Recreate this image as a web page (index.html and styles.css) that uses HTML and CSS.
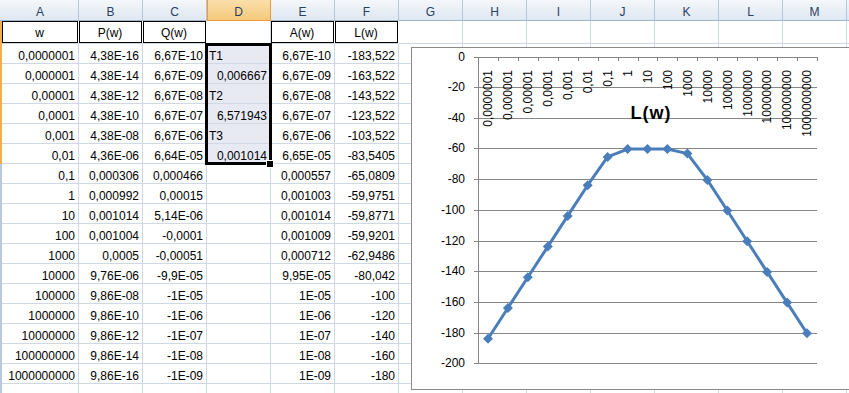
FILE: index.html
```html
<!DOCTYPE html>
<html lang="en">
<head>
    <meta charset="UTF-8">
    <meta name="viewport" content="width=device-width, initial-scale=1.0">
    <title>L(w) - Sheet1</title>
    <link rel="stylesheet" href="styles.css">
</head>
<body>
    <div class="sheet">
        <div class="row head">
            <div class="rh"></div><div>A</div><div>B</div><div>C</div><div class="cur">D</div><div>E</div><div>F</div><div>G</div><div>H</div><div>I</div><div>J</div><div>K</div><div>L</div><div>M</div><div></div>
        </div>

        <div class="row top">
            <div class="rh sel"></div><div class="box">w</div><div class="box">P(w)</div><div class="box">Q(w)</div><div></div><div class="box">A(w)</div><div class="box">L(w)</div><div class="rest"></div>
        </div>

        <div class="row"><div class="rh sel"></div><div>0,0000001</div><div>4,38E-16</div><div>6,67E-10</div><div class="d l">T1</div><div>6,67E-10</div><div>-183,522</div><div class="rest"></div></div>
        <div class="row"><div class="rh sel"></div><div>0,000001</div><div>4,38E-14</div><div>6,67E-09</div><div class="d">0,006667</div><div>6,67E-09</div><div>-163,522</div><div class="rest"></div></div>
        <div class="row"><div class="rh sel"></div><div>0,00001</div><div>4,38E-12</div><div>6,67E-08</div><div class="d l">T2</div><div>6,67E-08</div><div>-143,522</div><div class="rest"></div></div>
        <div class="row"><div class="rh sel"></div><div>0,0001</div><div>4,38E-10</div><div>6,67E-07</div><div class="d">6,571943</div><div>6,67E-07</div><div>-123,522</div><div class="rest"></div></div>
        <div class="row"><div class="rh sel"></div><div>0,001</div><div>4,38E-08</div><div>6,67E-06</div><div class="d l">T3</div><div>6,67E-06</div><div>-103,522</div><div class="rest"></div></div>
        <div class="row"><div class="rh sel"></div><div>0,01</div><div>4,36E-06</div><div>6,64E-05</div><div class="d">0,001014</div><div>6,65E-05</div><div>-83,5405</div><div class="rest"></div></div>
        <div class="row"><div class="rh"></div><div>0,1</div><div>0,000306</div><div>0,000466</div><div></div><div>0,000557</div><div>-65,0809</div><div class="rest"></div></div>
        <div class="row"><div class="rh"></div><div>1</div><div>0,000992</div><div>0,00015</div><div></div><div>0,001003</div><div>-59,9751</div><div class="rest"></div></div>
        <div class="row"><div class="rh"></div><div>10</div><div>0,001014</div><div>5,14E-06</div><div></div><div>0,001014</div><div>-59,8771</div><div class="rest"></div></div>
        <div class="row"><div class="rh"></div><div>100</div><div>0,001004</div><div>-0,0001</div><div></div><div>0,001009</div><div>-59,9201</div><div class="rest"></div></div>
        <div class="row"><div class="rh"></div><div>1000</div><div>0,0005</div><div>-0,00051</div><div></div><div>0,000712</div><div>-62,9486</div><div class="rest"></div></div>
        <div class="row"><div class="rh"></div><div>10000</div><div>9,76E-06</div><div>-9,9E-05</div><div></div><div>9,95E-05</div><div>-80,042</div><div class="rest"></div></div>
        <div class="row"><div class="rh"></div><div>100000</div><div>9,86E-08</div><div>-1E-05</div><div></div><div>1E-05</div><div>-100</div><div class="rest"></div></div>
        <div class="row"><div class="rh"></div><div>1000000</div><div>9,86E-10</div><div>-1E-06</div><div></div><div>1E-06</div><div>-120</div><div class="rest"></div></div>
        <div class="row"><div class="rh"></div><div>10000000</div><div>9,86E-12</div><div>-1E-07</div><div></div><div>1E-07</div><div>-140</div><div class="rest"></div></div>
        <div class="row"><div class="rh"></div><div>100000000</div><div>9,86E-14</div><div>-1E-08</div><div></div><div>1E-08</div><div>-160</div><div class="rest"></div></div>
        <div class="row"><div class="rh"></div><div>1000000000</div><div>9,86E-16</div><div>-1E-09</div><div></div><div>1E-09</div><div>-180</div><div class="rest"></div></div>
        <div class="row"><div class="rh"></div><div></div><div></div><div></div><div></div><div></div><div></div><div class="rest"></div></div>

        <!-- selected range D2:D7 -->
        <div class="selection"><span class="handle"></span></div>

        <!-- chart object -->
        <div class="chart">
            <svg width="438" height="341" viewBox="412 48 438 341">
                <defs>
                    <path id="dm" d="M0 -5 L5 0 L0 5 L-5 0 Z"/>
                </defs>
                <path class="grid" d="M474 57.5H817 M474 87.5H817 M474 118.5H817 M474 148.5H817 M474 179.5H817 M474 210.5H817 M474 241.5H817 M474 271.5H817 M474 302.5H817 M474 333.5H817 M474 363.5H817"/>
                <path class="grid" d="M478.5 57V364 M498.5 57V61 M518.5 57V61 M538.5 57V61 M558.5 57V61 M578.5 57V61 M598.5 57V61 M618.5 57V61 M638.5 57V61 M657.5 57V61 M677.5 57V61 M697.5 57V61 M717.5 57V61 M737.5 57V61 M757.5 57V61 M777.5 57V61 M797.5 57V61 M817.5 57V61"/>

                <g class="ylab">
                    <text x="465" y="61">0</text>
                    <text x="465" y="91">-20</text>
                    <text x="465" y="122">-40</text>
                    <text x="465" y="152">-60</text>
                    <text x="465" y="183">-80</text>
                    <text x="465" y="214">-100</text>
                    <text x="465" y="245">-120</text>
                    <text x="465" y="275">-140</text>
                    <text x="465" y="306">-160</text>
                    <text x="465" y="337">-180</text>
                    <text x="465" y="367">-200</text>
                </g>

                <g class="xlab">
                    <text transform="translate(492.3 70) rotate(-90)">0,0000001</text>
                    <text transform="translate(512.2 70) rotate(-90)">0,000001</text>
                    <text transform="translate(532.1 70) rotate(-90)">0,00001</text>
                    <text transform="translate(552.1 70) rotate(-90)">0,0001</text>
                    <text transform="translate(572 70) rotate(-90)">0,001</text>
                    <text transform="translate(592 70) rotate(-90)">0,01</text>
                    <text transform="translate(611.9 70) rotate(-90)">0,1</text>
                    <text transform="translate(631.9 70) rotate(-90)">1</text>
                    <text transform="translate(651.8 70) rotate(-90)">10</text>
                    <text transform="translate(671.7 70) rotate(-90)">100</text>
                    <text transform="translate(691.7 70) rotate(-90)">1000</text>
                    <text transform="translate(711.6 70) rotate(-90)">10000</text>
                    <text transform="translate(731.6 70) rotate(-90)">100000</text>
                    <text transform="translate(751.5 70) rotate(-90)">1000000</text>
                    <text transform="translate(771.4 70) rotate(-90)">10000000</text>
                    <text transform="translate(791.4 70) rotate(-90)">100000000</text>
                    <text transform="translate(811.3 70) rotate(-90)">1000000000</text>
                </g>

                <text class="title" x="651" y="118.5">L(w)</text>

                <polyline class="series" points="488,338.7 507.9,308 527.8,277.3 547.8,246.6 567.7,215.9 587.7,185.2 607.6,156.9 627.6,149.1 647.5,148.9 667.4,149 687.4,153.6 707.3,179.9 727.3,210.5 747.2,241.2 767.1,271.9 787.1,302.6 807,333.3"/>
                <g class="marks">
                    <use href="#dm" x="488" y="338.7"/>
                    <use href="#dm" x="507.9" y="308"/>
                    <use href="#dm" x="527.8" y="277.3"/>
                    <use href="#dm" x="547.8" y="246.6"/>
                    <use href="#dm" x="567.7" y="215.9"/>
                    <use href="#dm" x="587.7" y="185.2"/>
                    <use href="#dm" x="607.6" y="156.9"/>
                    <use href="#dm" x="627.6" y="149.1"/>
                    <use href="#dm" x="647.5" y="148.9"/>
                    <use href="#dm" x="667.4" y="149"/>
                    <use href="#dm" x="687.4" y="153.6"/>
                    <use href="#dm" x="707.3" y="179.9"/>
                    <use href="#dm" x="727.3" y="210.5"/>
                    <use href="#dm" x="747.2" y="241.2"/>
                    <use href="#dm" x="767.1" y="271.9"/>
                    <use href="#dm" x="787.1" y="302.6"/>
                    <use href="#dm" x="807" y="333.3"/>
                </g>
            </svg>
        </div>
    </div>
</body>
</html>
```

FILE: styles.css
```css
* {
    box-sizing: border-box;
}

body {
    margin: 0;
    overflow: hidden;
    background: #ffffff;
    font-family: 'Liberation Sans', Arial, sans-serif;
    font-size: 12px;
    color: #000000;
}

.sheet {
    position: relative;
    width: 849px;
    height: 393px;
    overflow: hidden;
}

/* grid rows */
.row {
    display: grid;
    grid-template-columns: 2px 77px repeat(5, 64px) 1fr;
    height: 20px;
}

.row > div {
    border-right: 1px solid #d0d7e5;
    border-bottom: 1px solid #d0d7e5;
    padding: 5px 3px 0 2px;
    line-height: 14px;
    text-align: right;
    white-space: nowrap;
    overflow: hidden;
}

.row > .rh {
    border: none;
    padding: 0;
    background: #b7c9df;
}

.row > .rh.sel {
    background: #f2ad4c;
}

.row > .rest {
    padding: 0;
    border-right: none;
    background: repeating-linear-gradient(to right, transparent 0 63px, #d0d7e5 63px 64px);
}

.row > .d {
    background: #e7e9f3;
}

.row > .l {
    text-align: left;
}

/* column headers */
.head {
    grid-template-columns: 2px 77px repeat(13, 64px);
    height: 21px;
}

.head > div {
    background: linear-gradient(#f4f7fb, #dfe7f2);
    border-right: 1px solid #b5c6da;
    border-bottom: 1px solid #9eb6ce;
    padding: 4px 0 0;
    line-height: 16px;
    text-align: center;
    color: #27415f;
}

.head > .rh {
    background: linear-gradient(#f4f7fb, #dfe7f2);
    border-bottom: 1px solid #9eb6ce;
}

.head > .cur {
    background: linear-gradient(#fadfaa, #f5c97c);
    border-right-color: #f29a3a;
    border-bottom-color: #f29a3a;
    box-shadow: inset 1px 0 #f29a3a;
}

/* row 1 with boxed titles */
.top {
    height: 23px;
}

.top > .box {
    box-shadow: inset 0 0 0 1px #000000;
    border-right-color: #ffffff;
    text-align: center;
}

/* selection D2:D7 */
.selection {
    position: absolute;
    left: 205px;
    top: 43px;
    width: 67px;
    height: 122px;
    border: 3px solid #000000;
}

.handle {
    position: absolute;
    left: 58px;
    top: 114px;
    width: 8px;
    height: 8px;
    background: #000000;
    border: 1px solid #ffffff;
}

/* chart */
.chart {
    position: absolute;
    left: 411px;
    top: 47px;
    width: 440px;
    height: 343px;
    border: 1px solid #8a8a8a;
    background: #ffffff;
}

.chart svg {
    display: block;
}

.chart text {
    font-family: 'Liberation Sans', Arial, sans-serif;
    font-size: 12px;
    fill: #000000;
}

.grid {
    stroke: #868686;
    stroke-width: 1;
    fill: none;
}

.ylab text {
    text-anchor: end;
}

.xlab text {
    text-anchor: end;
}

.chart .title {
    font-size: 18px;
    font-weight: bold;
    letter-spacing: 1px;
    text-anchor: middle;
}

.series {
    fill: none;
    stroke: #4a7ebb;
    stroke-width: 3;
    stroke-linejoin: round;
}

.marks use {
    fill: #4a7ebb;
}
```
